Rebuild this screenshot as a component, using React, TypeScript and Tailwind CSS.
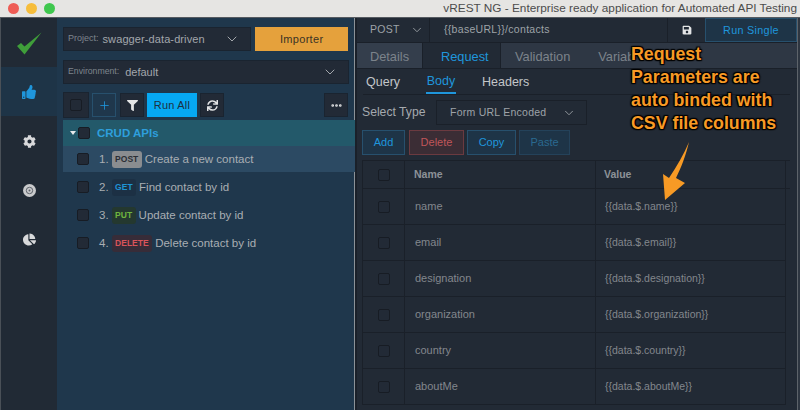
import { ChevronDown, Plus, Ellipsis } from 'lucide-react'
import { FaThumbsUp, FaCog, FaChartPie, FaFilter, FaSave, FaSync } from 'react-icons/fa'

const requests = [
  { n: 1, method: 'POST', title: 'Create a new contact', badge: 'bg-[#8a8d90] text-[#2b2f35]', active: true },
  { n: 2, method: 'GET', title: 'Find contact by id', badge: 'bg-[#1c3044] text-[#1f94d6]', active: false },
  { n: 3, method: 'PUT', title: 'Update contact by id', badge: 'bg-[#24382f] text-[#6fb53f]', active: false },
  { n: 4, method: 'DELETE', title: 'Delete contact by id', badge: 'bg-[#372c38] text-[#d9545a]', active: false },
]

const params = ['name', 'email', 'designation', 'organization', 'country', 'aboutMe']

function Box({ className = '' }: { className?: string }) {
  return <div className={`w-3 h-3 rounded-[2px] border border-[#171c24] bg-[#222a36] ${className}`} />
}

function Sidebar() {
  return (
    <div className="w-[56px] ml-px shrink-0 bg-[#212a35] flex flex-col items-center">
      <div className="h-[49px] w-full flex items-center justify-center">
        <svg className="w-[26px] h-[24px]" viewBox="0 0 26 24">
          <path d="M1 15 L5 12 L8.5 15.5 L25.5 1.5 L8.5 23.5 Z" fill="#3f9e3a" />
        </svg>
      </div>
      <div className="h-[49px] w-full bg-[#1e3447] flex items-center justify-center">
        <FaThumbsUp className="w-[14px] h-[14px] text-[#1f96dc]" />
      </div>
      <FaCog className="w-[13px] h-[13px] text-[#d8d9db] mt-[19px]" />
      <svg className="w-[13px] h-[13px] mt-[36px]" viewBox="0 0 13 13">
        <circle cx="6.5" cy="6.5" r="6.5" fill="#c9cacc" />
        <circle cx="6.5" cy="6.5" r="3.2" fill="none" stroke="#5b6068" strokeWidth="1" />
        <circle cx="6.5" cy="6.5" r="1" fill="#5b6068" />
      </svg>
      <FaChartPie className="w-[13px] h-[13px] text-[#d8d9db] mt-[36px]" />
    </div>
  )
}

function LeftPanel() {
  return (
    <div className="w-[298px] shrink-0 bg-[#1f374c] pt-[9px] border-r border-[#8b9298]">
      <div className="flex gap-1 pl-[6px] pr-[6px]">
        <div className="w-[189px] h-6 bg-[#222a36] border border-[#1a2430] flex items-center pl-1 pr-[10px]">
          <span className="text-[9px] text-[#7e858d]">Project:</span>
          <span className="text-[11px] text-[#a3a7ac] ml-1 tracking-[0.1px]">swagger-data-driven</span>
          <ChevronDown className="w-4 h-4 text-[#a3a7ac] ml-auto" strokeWidth={1.5} />
        </div>
        <div className="w-[93px] h-6 bg-[#e5a13c] flex items-center justify-center text-[11px] text-[#3a3325] tracking-[0.3px]">
          Importer
        </div>
      </div>
      <div className="ml-[6px] mt-[9px] w-[286px] h-6 bg-[#222a36] border border-[#1a2430] flex items-center pl-1 pr-[10px]">
        <span className="text-[8.7px] text-[#7e858d]">Environment:</span>
        <span className="text-[11px] text-[#a3a7ac] ml-[6px]">default</span>
        <ChevronDown className="w-4 h-4 text-[#a3a7ac] ml-auto" strokeWidth={1.5} />
      </div>
      <div className="flex items-center mt-2 pl-[6px] pr-[6px]">
        <div className="w-[26px] h-[26px] bg-[#222a36] border border-[#1a2430] flex items-center justify-center">
          <Box />
        </div>
        <div className="w-6 h-6 ml-[3px] bg-[#1f374c] border border-[#27506d] flex items-center justify-center">
          <Plus className="w-[13px] h-[13px] text-[#1f96dc]" strokeWidth={1.5} />
        </div>
        <div className="w-6 h-6 ml-1 bg-[#222a36] border border-[#1a2430] flex items-center justify-center">
          <FaFilter className="w-[11px] h-[11px] text-[#e4e5e6]" />
        </div>
        <div className="w-[50px] h-6 ml-[3px] bg-[#06a9f4] flex items-center justify-center text-[11px] text-[#1d3040] tracking-[0.2px]">
          Run All
        </div>
        <div className="w-6 h-6 ml-[3px] bg-[#222a36] border border-[#1a2430] flex items-center justify-center">
          <FaSync className="w-[11px] h-[11px] text-[#e4e5e6]" />
        </div>
        <div className="w-6 h-6 ml-auto bg-[#222a36] border border-[#1a2430] flex items-center justify-center">
          <Ellipsis className="w-[13px] h-[13px] text-[#e4e5e6]" strokeWidth={3} />
        </div>
      </div>
      <div className="ml-[6px] mr-[-1px] mt-[2px] h-[26px] bg-[#23596a] flex items-center">
        <div className="w-0 h-0 ml-[7px] border-x-[3px] border-x-transparent border-t-[4px] border-t-[#e8eaeb]" />
        <Box className="ml-[2px]" />
        <span className="ml-[7px] pt-px text-[11.5px] font-bold text-[#2e9fdc]">CRUD APIs</span>
      </div>
      <div className="ml-[6px] mr-[-1px]">
        {requests.map((r) => (
          <div key={r.n} className={`flex items-center pl-[14px] ${r.active ? 'h-[26px] mb-px bg-[#2c4a63]' : 'h-[28px]'}`}>
            <Box />
            <span className="ml-[10px] pt-px text-[11.5px] text-[#a9aeb3]">{r.n}.</span>
            <span className={`ml-[3px] px-[3.5px] py-[2.5px] rounded-[3px] text-[8.5px] font-bold leading-[12px] ${r.badge}`}>
              {r.method}
            </span>
            <span className="ml-[3px] pt-px text-[11.5px] text-[#a9aeb3]">{r.title}</span>
          </div>
        ))}
      </div>
    </div>
  )
}

function Table() {
  return (
    <div className="mt-[5px] ml-[5px] w-[428px] border-t border-l border-[#1a2029]">
      <div className="flex h-[28px] border-b border-[#1a2029] text-[10.5px] font-bold text-[#8d9298]">
        <div className="w-[42px] border-r border-[#1a2029] flex items-center justify-center"><Box /></div>
        <div className="w-[191px] border-r border-[#1a2029] flex items-center pl-[9px]">Name</div>
        <div className="w-[190px] border-r border-[#1a2029] flex items-center pl-2">Value</div>
      </div>
      {params.map((p) => (
        <div key={p} className="flex h-[36px] w-[423px] border-b border-[#1a2029] text-[11px] text-[#82878d]">
          <div className="w-[42px] border-r border-[#1a2029] flex items-center justify-center"><Box /></div>
          <div className="w-[191px] border-r border-[#1a2029] flex items-center pl-[10px]">{p}</div>
          <div className="w-[190px] border-r border-[#1a2029] flex items-center pl-[9px] text-[10.5px]">{`{{data.$.${p}}}`}</div>
        </div>
      ))}
    </div>
  )
}

function RightPanel() {
  return (
    <div className="w-[442px] shrink-0 bg-[#222a35] border-l-2 border-[#1a2029]">
      <div className="flex h-[25px] border-b border-[#1a2029] text-[10.5px] text-[#9ea3a8] tracking-[0.3px]">
        <div className="w-[73px] flex items-center pl-[13px] border-r border-[#1a2029]">
          POST
          <ChevronDown className="w-[14px] h-[14px] ml-[10px]" strokeWidth={1.5} />
        </div>
        <div className="w-[238px] flex items-center pl-[14px] border-r border-[#1a2029]">{'{{baseURL}}/contacts'}</div>
        <div className="w-[37px] flex items-center justify-center">
          <FaSave className="w-[10px] h-[10px] text-[#e4e5e6]" />
        </div>
        <div className="w-[92px] bg-[#1e3447] border border-[#27506d] flex items-center justify-center text-[10.8px] text-[#1f96dc]">
          Run Single
        </div>
      </div>
      <div className="flex h-[26px] bg-[#2e3744] border-b border-[#1a2029] text-[12.8px] text-[#7c838b]">
        <div className="w-[65px] pt-[2px] bg-[#343e4c] flex items-center justify-center">Details</div>
        <div className="w-[79px] pt-[2px] flex items-center pl-[18px] bg-[#222a35] text-[#1f96dc] border-x border-[#1a2029]">Request</div>
        <div className="pt-[2px] flex items-center pl-[14px]">Validation</div>
        <div className="pt-[2px] flex items-center pl-[28px]">Variab</div>
      </div>
      <div className="ml-[6px] mr-[7px] h-[26px] flex items-end border-b border-[#1a2029] text-[12.5px] text-[#c3c6c9] pl-[3px]">
        <div className="w-[60px] h-[26px] pt-[2px] flex items-center">Query</div>
        <div className="w-[30px] h-[26px] pt-[2px] flex items-center justify-center text-[#1f96dc] border-b-2 border-[#1f96dc]">Body</div>
        <div className="h-[26px] pt-[2px] flex items-center ml-[26px]">Headers</div>
      </div>
      <div className="flex items-center mt-[5px] ml-[5px] text-[12.2px] text-[#a5a9ae]">
        <span className="w-[74px]">Select Type</span>
        <div className="w-[151px] h-[25px] border border-[#1a2029] flex items-center pl-[13px] pr-[10px] text-[10.5px] tracking-[0.25px] text-[#9ea3a8]">
          Form URL Encoded
          <ChevronDown className="w-[14px] h-[14px] ml-auto" strokeWidth={1.5} />
        </div>
      </div>
      <div className="flex mt-[5px] ml-[5px] gap-[3px] text-[11px] h-[25px]">
        <div className="w-[43px] bg-[#1e3447] border border-[#27506d] flex items-center justify-center text-[#1f96dc]">Add</div>
        <div className="w-[55px] ml-[1px] bg-[#3b2d35] border border-[#6b3a40] flex items-center justify-center text-[#c0565a]">Delete</div>
        <div className="w-[49px] bg-[#1e3447] border border-[#27506d] flex items-center justify-center text-[#1f96dc]">Copy</div>
        <div className="w-[51px] bg-[#1e3447] border border-[#24425a] flex items-center justify-center text-[#2a6a90]">Paste</div>
      </div>
      <Table />
    </div>
  )
}

export default function App() {
  return (
    <div className="relative w-[800px] h-[410px] overflow-hidden bg-[#222a35] font-['Liberation_Sans',sans-serif]">
      <div className="h-[18px] bg-[#e6e5e3] border-b border-[#555a60] flex items-center pl-2 relative">
        <div className="flex gap-[7px]">
          <div className="w-[11px] h-[11px] rounded-full bg-[#ee5c55]" />
          <div className="w-[11px] h-[11px] rounded-full bg-[#f6bd3b]" />
          <div className="w-[11px] h-[11px] rounded-full bg-[#3fc74e]" />
        </div>
        <div className="ml-auto pr-[3px] text-[11.8px] text-[#4c4c4c] whitespace-nowrap">
          vREST NG - Enterprise ready application for Automated API Testing
        </div>
      </div>
      <div className="flex h-[392px] bg-[#4a5057]">
        <Sidebar />
        <LeftPanel />
        <RightPanel />
        <div className="w-[3px] border-l border-[#5d636a] bg-[#2e3641]" />
      </div>

      {/* annotation over the request body */}
      <div className="absolute left-[631px] top-[43px] w-[165px] text-[17.8px] leading-[23px] font-bold text-[#f79a25] [text-shadow:0_0_2px_#000,1px_1px_1px_#000,-1px_-1px_1px_#000,1px_-1px_1px_#000,-1px_1px_1px_#000]">
        Request
        <br />
        Parameters are
        <br />
        auto binded with
        <br />
        CSV file columns
      </div>
      <svg className="absolute left-[660px] top-[140px] w-[34px] h-[62px]" viewBox="0 0 34 62">
        <path d="M29 2 C24 14 17 26 9 38 L3 34 L5 60 L25 43 L16 38 C21 28 26 15 29 2 Z" fill="#f79a25" />
      </svg>
    </div>
  )
}
